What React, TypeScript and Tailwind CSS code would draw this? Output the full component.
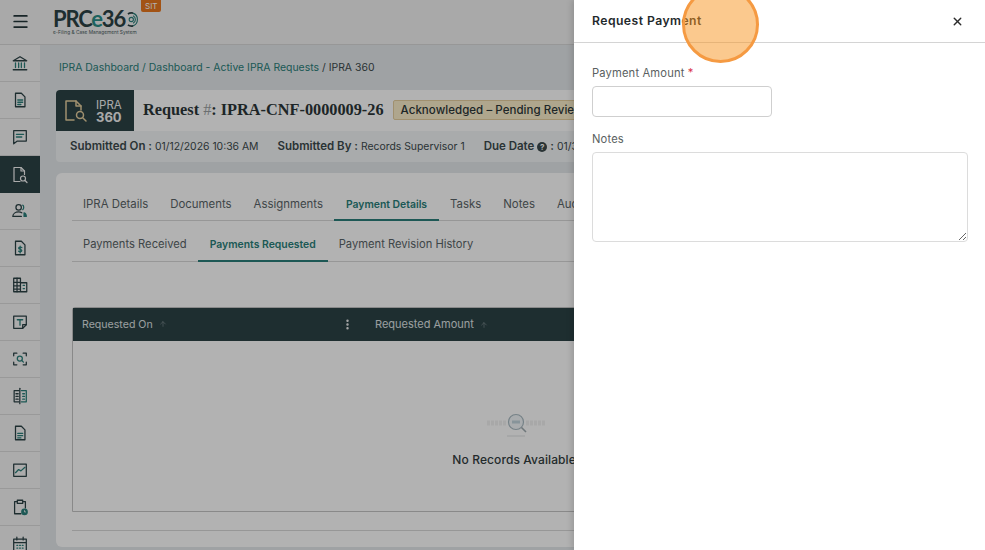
import { ArrowUp, EllipsisVertical, Menu, X } from "lucide-react";

const ink = "#2c4246";
const teal = "#2a7f7a";

const SideIcon = ({ children }: { children: React.ReactNode }) => (
  <svg width="18" height="18" viewBox="0 0 20 20" fill="none" stroke={ink} strokeWidth="1.400" strokeLinecap="round" strokeLinejoin="round">
    {children}
  </svg>
);

const FileBase = () => <path d="M5 2.500h6.500L15.500 6.500v11h-10.500z" />;

const icons = [
  <SideIcon key="bank">
    <path d="M2.500 7.500 10 3l7.500 4.500z" />
    <path d="M5 10v5M8.500 10v5M11.500 10v5M15 10v5" stroke={teal} />
    <path d="M2.500 17.500h15" />
  </SideIcon>,
  <SideIcon key="doc">
    <FileBase />
    <path d="M7.500 10h5.500M7.500 12.500h5.500M7.500 15h3.500" stroke={teal} />
  </SideIcon>,
  <SideIcon key="note">
    <path d="M3 3h14v11.500H7L3 17.500z" />
    <path d="M6 7h8M6 10h6" stroke={teal} />
  </SideIcon>,
  <svg key="ipra" width="20" height="20" viewBox="0 0 20 20" fill="none" stroke="#f5f5f5" strokeWidth="1.200" strokeLinecap="round" strokeLinejoin="round">
    <path d="M10 16.500H4V2.500h7l3.500 3.500v3.500" />
    <path d="M11 2.500V6h3.500" />
    <circle cx="13" cy="13.500" r="2.500" />
    <path d="m15 15.500 2 2" />
  </svg>,
  <SideIcon key="users">
    <circle cx="8.500" cy="6" r="3" />
    <path d="M2 16c0-3 3-5 6.500-5 1.500 0 2.500.3 3.500 1M2 16h9.500" />
    <path d="M13 3.500c1.500.5 1.500 4 0 5" stroke={teal} />
    <path d="M14.500 12c1.500.5 2.500 2 2.500 4h-2.500z" stroke={teal} fill={teal} />
  </SideIcon>,
  <SideIcon key="money">
    <FileBase />
    <path d="M12 9.500c-1-.8-3.500-.8-3.500.7 0 1.800 3.500.8 3.500 2.600 0 1.500-2.500 1.500-3.500.7M10.200 8v7.500" stroke={teal} />
  </SideIcon>,
  <SideIcon key="building">
    <path d="M3 17.500v-15h7.500v15zM10.500 7.500h7v10h-7" />
    <path d="M3 7h7.500M3 11h7.500M3 14.500h7.500M6.700 2.500v15" />
    <path d="M13.500 10.500h1.500M13.500 14h1.500" stroke={teal} />
  </SideIcon>,
  <SideIcon key="text">
    <path d="M3 3.500h14v9.500l-4 4H3z" />
    <path d="M13 17v-4h4" />
    <path d="M7 7.500h6M10 7.500v6" stroke={teal} />
  </SideIcon>,
  <SideIcon key="scan">
    <path d="M3 6.500V3.500h3.500M13.500 3.500H17v3M17 13.500v3h-3.500M6.500 16.500H3v-3" />
    <circle cx="9.800" cy="9.500" r="2.800" stroke={teal} />
    <path d="m12 11.700 1.800 1.800" stroke={teal} />
  </SideIcon>,
  <SideIcon key="compare">
    <path d="M9 4H3.500v12.500H9M5.500 7.500H8M5.500 10.500H8M5.500 13.500H8" />
    <path d="M9.800 1.500v17" />
    <path d="M11.500 4H17v12.500h-5.500M13 7.500h2M13 10.500h2M13 13.500h2" stroke={teal} />
  </SideIcon>,
  <SideIcon key="doc2">
    <FileBase />
    <path d="M7.500 10.500h5.500M7.500 13h5.500M7.500 15.500h3.500" stroke={teal} />
  </SideIcon>,
  <SideIcon key="chart">
    <path d="M3 3.500h14v13.500H3z" />
    <path d="m5 13 3.500-3.500 2.500 1.500 4.500-4" stroke={teal} />
  </SideIcon>,
  <SideIcon key="clip">
    <path d="M7 4H4v13.500h7M13 4h3v7" />
    <path d="M7 2.500h6V6H7z" />
    <circle cx="15" cy="15.500" r="3" fill={teal} stroke={teal} />
    <path d="M15 14v1.500h1.200" stroke="#f5f5f5" strokeWidth="0.900" />
  </SideIcon>,
  <SideIcon key="calendar">
    <path d="M3 4.500h14v13H3zM3 8.500h14M6.500 2.500v3M13.500 2.500v3" />
    <path d="M6.500 11.500h1M9.500 11.500h1M12.500 11.500h1M6.500 14.500h1M9.500 14.500h1M12.500 14.500h1" stroke={teal} />
  </SideIcon>,
];

const tabs = ["IPRA Details", "Documents", "Assignments", "Payment Details", "Tasks", "Notes", "Audit Log"];
const subTabs = ["Payments Received", "Payments Requested", "Payment Revision History"];

export default function App() {
  return (
    <div className="relative h-[550px] w-[985px] overflow-hidden bg-[#e4e8eb] font-['Inter',sans-serif] text-[#3c4a4d]">
      {/* top bar */}
      <header className="flex h-[45px] items-center border-b border-[#d8d8d8] bg-[#f3f3f3]">
        <div className="mb-[2px] flex w-[41px] justify-center">
          <Menu size={19} strokeWidth={2.2} color="#233538" />
        </div>
        <div className="ml-[12px] flex w-[82px] flex-col">
          <div className="flex h-[20px] items-center">
            <span className="font-['Lato',sans-serif] text-[22px] font-bold leading-[20px] tracking-[-1.200px] text-[#2c4246]">
              PRC<span className="text-[#2a8f88]">e</span>36
            </span>
            <svg className="ml-[1px] shrink-0" width="14" height="17" viewBox="0 0 16 20" fill="none" stroke="#2a7f7a" strokeWidth="1.300">
              <circle cx="6" cy="10" r="2.500" />
              <path d="M8 2.500a8 8 0 0 1 0 15M8 5.500a5 5 0 0 1 0 9" />
              <path d="M2 3.500a8 8 0 0 1 6-1M2 16.500a8 8 0 0 0 6 1" stroke="#2c4246" strokeWidth="2" />
            </svg>
          </div>
          <span className="whitespace-nowrap text-[4.800px] leading-[6px] text-[#4a5c60]">e-Filing &amp; Case Management System</span>
        </div>
        <div className="mb-[32px] ml-[6px] rounded-b-[2px] bg-[#e8771f] px-[4px] text-[8px] leading-[12px] text-white">SIT</div>
      </header>

      <div className="flex">
        {/* sidebar */}
        <nav className="flex w-[40px] shrink-0 flex-col bg-[#f5f5f5]">
          {icons.map((icon, i) => (
            <div
              key={i}
              className={
                i === 3
                  ? "flex h-[37px] shrink-0 items-center justify-center bg-[#2c4246]"
                  : "flex h-[37px] shrink-0 items-center justify-center border-b border-[#dcdcdc]"
              }
            >
              {icon}
            </div>
          ))}
        </nav>

        {/* main */}
        <main className="w-[945px] shrink-0 pl-[16px] pr-[15px]">
          <div className="pl-[3px] pt-[16px] text-[10.450px] leading-[14px] text-[#2a7f7a]">
            IPRA Dashboard / Dashboard - Active IPRA Requests <span className="text-[#3c4a4d]">/ IPRA 360</span>
          </div>

          <div className="mt-[15px] overflow-hidden rounded-[4px] bg-[#f3f5f6]">
            <div className="flex h-[41px] items-center bg-white">
              <div className="flex h-[41px] w-[78px] items-center gap-[8px] bg-[#2c4246] pl-[8px]">
                <svg width="24" height="26" viewBox="0 0 24 26" fill="none" stroke="#e5cf9f" strokeWidth="1.500" strokeLinecap="round" strokeLinejoin="round">
                  <path d="M10 22H2V3h10l5 5v4" />
                  <path d="M12 3v5h5" />
                  <circle cx="16" cy="17" r="3.500" />
                  <path d="m19 20 3 3" />
                </svg>
                <div className="text-[11.500px] leading-[12px] text-[#f3f3f3]">
                  IPRA
                  <div className="text-[13px] font-bold">360</div>
                </div>
              </div>
              <h1 className="ml-[9px] whitespace-nowrap font-['Liberation_Serif',serif] text-[16.300px] font-bold text-[#2c3638]">
                Request <span className="font-normal text-[#9aa0a2]">#</span>: IPRA-CNF-0000009-26
              </h1>
              <span className="mb-[2px] ml-[9px] whitespace-nowrap rounded-[2px] border border-[#e5cf9f] bg-[#fbeecb] px-[7px] text-[11.500px] font-medium leading-[18px] tracking-[0.05px] text-[#2c3638]">
                Acknowledged – Pending Review
              </span>
            </div>
            <div className="flex h-[31px] items-center gap-[19px] pl-[14px] text-[10.400px]">
              <span className="whitespace-nowrap"><b className="text-[11.500px] font-semibold">Submitted On :</b> 01/12/2026 10:36 AM</span>
              <span className="whitespace-nowrap"><b className="text-[11.500px] font-semibold">Submitted By :</b> Records Supervisor 1</span>
              <span className="flex items-center gap-[3px] whitespace-nowrap">
                <b className="text-[11.500px] font-semibold">Due Date</b>
                <span className="flex h-[10px] w-[10px] items-center justify-center rounded-full bg-[#3c4a4d] text-[8px] font-bold leading-none text-white">?</span>
                <b className="text-[11.500px] font-semibold">:</b> 01/30/2026
              </span>
            </div>
          </div>

          <section className="mt-[11px] h-[374px] rounded-[6px] bg-white px-[16px] pt-[20px]">
            <div className="flex h-[28px] border-b border-[#d9d9d9]">
              {tabs.map((t) => (
                <div
                  key={t}
                  className={
                    t === "Payment Details"
                      ? "-mb-px whitespace-nowrap border-b-2 border-[#2a7f7a] px-[12px] pt-[3px] text-[10.400px] font-semibold leading-[17px] text-[#2a7f7a]"
                      : "whitespace-nowrap px-[11px] pt-[3px] text-[11.400px] leading-[17px] text-[#5a6467]"
                  }
                >
                  {t}
                </div>
              ))}
            </div>
            <div className="mt-[10px] flex h-[31px] border-b border-[#d9d9d9]">
              {subTabs.map((t) => (
                <div
                  key={t}
                  className={
                    t === "Payments Requested"
                      ? "-mb-px whitespace-nowrap border-b-2 border-[#2a7f7a] px-[12px] pt-[5px] text-[10.400px] font-semibold leading-[17px] text-[#2a7f7a]"
                      : "whitespace-nowrap px-[11px] pt-[5px] text-[11.200px] leading-[17px] text-[#5a6467]"
                  }
                >
                  {t}
                </div>
              ))}
            </div>

            <div className="mt-[45px] h-[205px] w-[886px] rounded-t-[3px] border border-[#c4c4c4]">
              <div className="flex h-[33px] items-center bg-[#2c4246] text-[10.600px] text-[#dfe3e4]">
                <div className="flex w-[268px] items-center gap-[6px] pl-[9px]">
                  Requested On <ArrowUp size={8} color="#7d8d90" />
                </div>
                <EllipsisVertical size={13} color="#f3f3f3" strokeWidth={2.500} />
                <div className="ml-[21px] flex items-center gap-[6px] text-[11px]">
                  Requested Amount <ArrowUp size={8} color="#7d8d90" />
                </div>
              </div>
              <div className="flex flex-col items-center pl-[2px] pt-[71px]">
                <svg width="60" height="26" viewBox="0 0 60 26" fill="none">
                  <path d="M1 11h19M40 11h19" stroke="#f1f1f1" strokeWidth="5" strokeDasharray="3 1" />
                  <circle cx="30" cy="10" r="7.500" fill="#f2f7fa" stroke="#a9bac2" strokeWidth="1.200" />
                  <path d="m35.500 15.500 4.500 4.500" stroke="#a0abaf" strokeWidth="1.600" />
                  <path d="M26 10h8" stroke="#c2d4dd" strokeWidth="3" />
                  <path d="M21 24h18" stroke="#dde0e2" />
                </svg>
                <div className="mt-[13px] whitespace-nowrap text-[12px] font-medium tracking-[0.1px] text-[#333d40]">No Records Available.</div>
              </div>
            </div>
            <div className="mt-[18px] border-t border-[#d9d9d9]" />
          </section>
        </main>
      </div>

      {/* dim layer */}
      <div className="absolute inset-0 bg-black/30" />

      {/* drawer */}
      <aside className="absolute bottom-0 right-0 top-0 w-[411px] bg-white shadow-[-2px_0_6px_rgba(0,0,0,0.15)]">
        <div className="flex h-[43px] items-center justify-between border-b border-[#d4d4d4] pl-[18px] pr-[21px]">
          <h2 className="text-[12.200px] font-semibold tracking-[0.45px] text-[#1f2a2c]">Request Payment</h2>
          <X size={13} strokeWidth={2.500} color="#2b2b2b" />
        </div>
        <div className="px-[18px] pt-[23px]">
          <label className="block text-[11.200px] leading-[14px] tracking-[0.15px] text-[#5a5f61]">
            Payment Amount <span className="text-[#d9344a]">*</span>
          </label>
          <input className="mt-[6px] block h-[31px] w-[180px] rounded-[4px] border border-[#cfcfcf]" />
          <label className="mt-[15px] block text-[11.200px] leading-[14px] tracking-[0.15px] text-[#5a5f61]">Notes</label>
          <textarea className="mt-[6px] block h-[90px] w-[376px] rounded-[4px] border border-[#dcdcdc]" />
        </div>
      </aside>

      {/* click marker */}
      <div className="absolute left-[682px] top-[-14px] h-[77px] w-[77px] rounded-full border-[3px] border-[#f59a42] bg-[#f7941d]/50" />
    </div>
  );
}
